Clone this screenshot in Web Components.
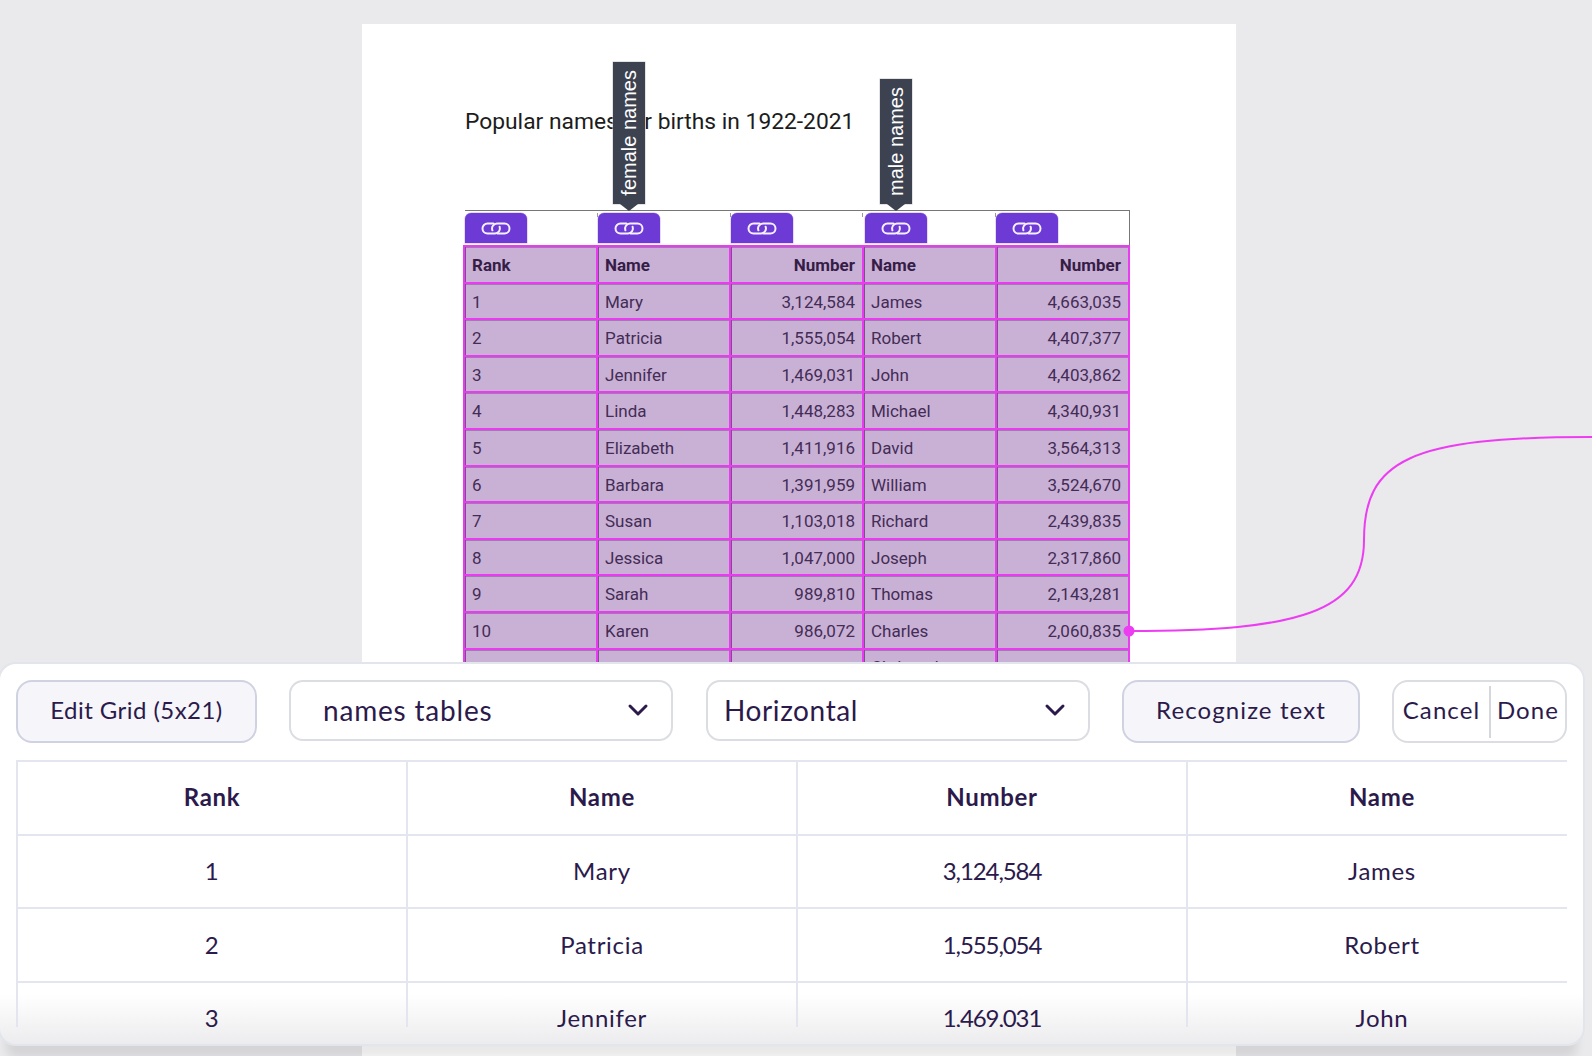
<!DOCTYPE html>
<html>
<head>
<meta charset="utf-8">
<title>Table extraction</title>
<style>
  html, body { margin: 0; height: 100%; }
  body { background: #eaeaed; overflow: hidden; position: relative; height: 1056px; font-family: "Lato", sans-serif; }
</style>
</head>
<body>
<doc-page>
  <span slot="title">Popular names for births in 1922-2021</span>
  <names-table></names-table>
</doc-page>
<link-wire></link-wire>
<grid-panel>
  <ui-button>Edit Grid (5x21)</ui-button>
  <ui-select style="width:384px;margin-left:32px" pad="32" size="28">names tables</ui-select>
  <ui-select style="width:384px;margin-left:33px;letter-spacing:.6px" pad="16" size="28">Horizontal</ui-select>
  <ui-button style="width:238px;margin-left:32px;letter-spacing:1.1px">Recognize text</ui-button>
  <done-group></done-group>
</grid-panel>

<script>
// Datos de la tabla que aparece en el documento
const HEAD = ["Rank", "Name", "Number", "Name", "Number"];
const ROWS = [
  ["1", "Mary", "3,124,584", "James", "4,663,035"],
  ["2", "Patricia", "1,555,054", "Robert", "4,407,377"],
  ["3", "Jennifer", "1,469,031", "John", "4,403,862"],
  ["4", "Linda", "1,448,283", "Michael", "4,340,931"],
  ["5", "Elizabeth", "1,411,916", "David", "3,564,313"],
  ["6", "Barbara", "1,391,959", "William", "3,524,670"],
  ["7", "Susan", "1,103,018", "Richard", "2,439,835"],
  ["8", "Jessica", "1,047,000", "Joseph", "2,317,860"],
  ["9", "Sarah", "989,810", "Thomas", "2,143,281"],
  ["10", "Karen", "986,072", "Charles", "2,060,835"],
  ["", "", "", "Christopher", ""],
];

class DocPage extends HTMLElement {
  constructor() {
    super();
    this.attachShadow({ mode: "open" });
    this.shadowRoot.innerHTML = `
    <style>
      :host { display: block; box-sizing: border-box; width: 874px; height: 1032px; margin: 24px 0 0 362px; padding: 85px 0 0 101px; background: #fff; }
      .title { margin-left: 2px; height: 26px; font: 400 22.8px/26px Roboto, sans-serif; color: #1c1c1c; white-space: nowrap; }
      .body { margin-top: 75px; }
    </style>
    <div class="title"><slot name="title"></slot></div>
    <div class="body"><slot></slot></div>`;
  }
}

class LinkTab extends HTMLElement {
  constructor() {
    super();
    this.attachShadow({ mode: "open" });
    const label = this.getAttribute("label");
    this.shadowRoot.innerHTML = `
    <style>
      :host { display: flex; align-items: center; justify-content: center; position: relative; box-sizing: border-box; width: 62px; height: 30px; background: #6e3ad6; border-radius: 6px 6px 0 0; box-shadow: 0 0 0 .5px #c9b8ef; }
      svg { display: block; }
      .tip { position: absolute; left: 50%; bottom: 39px; transform: translateX(-50%); width: 32px; height: var(--tip-h); background: #3d4250; color: #fff; z-index: 2; display: flex; align-items: center; justify-content: center; box-shadow: 0 0 0 .5px #c7c8cc; }
      .tip span { writing-mode: vertical-rl; transform: rotate(180deg); font: 400 20px/32px "Liberation Sans", sans-serif; white-space: nowrap; }
      .tip::after { content: ""; position: absolute; left: 50%; top: 100%; margin-left: -9px; border: 9px solid transparent; border-bottom: 0; border-top: 7px solid #3d4250; }
    </style>
    <svg width="30" height="13" viewBox="0 0 30 13" fill="none" stroke="#f4f0fd" stroke-width="2" stroke-linecap="round">
      <path d="M12.5 1.5H6.5a5 5 0 0 0 0 10H14a5 5 0 0 0 4.6-6.8"/>
      <path d="M16.5 11.5h7a5 5 0 0 0 0-10H16a5 5 0 0 0-4.6 6.8"/>
    </svg>
    ${label ? `<div class="tip"><span>${label}</span></div>` : ""}`;
  }
}

class NamesTable extends HTMLElement {
  constructor() {
    super();
    this.attachShadow({ mode: "open" });
    const tips = { 1: "female names", 3: "male names" };
    const tabs = HEAD.map((_, i) => `<div class="slot"><link-tab ${tips[i] ? `label="${tips[i]}"` : ""} style="--tip-h:${i === 1 ? 142 : 125}px;${i === 3 ? "margin-left:1.5px" : ""}"></link-tab></div>`).join("");
    const cell = (txt, i, cls) => `<div class="cell ${cls} ${i === 2 || i === 4 ? "num" : ""}">${txt}</div>`;
    const rows = HEAD.map((t, i) => cell(t, i, "th")).join("") +
      ROWS.map(r => r.map((t, i) => cell(t, i, "")).join("")).join("");
    this.shadowRoot.innerHTML = `
    <style>
      :host { display: block; width: 667px; font-family: Roboto, sans-serif; }
      .tabs { display: grid; grid-template-columns: repeat(5, 132.8px); box-sizing: border-box; height: 35px; margin-left: 2px; padding-top: 2px; width: 665px; border-top: 1px solid #777; border-right: 1px solid #777; }
      .slot { box-shadow: -1px 0 0 0 #999; height: 4px; }
      .slot:first-of-type { box-shadow: none; }
      .grid { display: grid; grid-template-columns: repeat(5, 133px); grid-auto-rows: 36.6px; box-sizing: border-box; width: 667px; border-right: 2px solid #e93cf0; }
      .cell { box-sizing: border-box; background: #c9b1d5; border-left: 2px solid #e93cf0; border-top: 2px solid #e93cf0; box-shadow: inset 1px 0 0 #7a4f8c, inset 0 1px 0 #a07ab0; padding: 1px 7px 0 7px; font-size: 17px; line-height: 34px; color: #432c55; white-space: nowrap; overflow: hidden; }
      .cell:nth-last-child(-n+5) { padding-top: 0; }
      .th { font-weight: 700; color: #351d47; }
      .num { text-align: right; }
    </style>
    <div class="tabs">${tabs}</div>
    <div class="grid">${rows}</div>`;
  }
}

class LinkWire extends HTMLElement {
  constructor() {
    super();
    this.attachShadow({ mode: "open" });
    this.shadowRoot.innerHTML = `
    <style>:host { position: absolute; left: 0; top: 0; display: block; width: 1592px; height: 1056px; pointer-events: none; }</style>
    <svg width="1592" height="1056" fill="none">
      <path d="M1129 631C1300 631 1364 612 1364 540C1364 460 1410 437 1592 437" stroke="#ec3df2" stroke-width="2"/>
      <circle cx="1129" cy="631" r="5.5" fill="#ec3df2"/>
    </svg>`;
  }
}

class UiButton extends HTMLElement {
  constructor() {
    super();
    this.attachShadow({ mode: "open" });
    this.shadowRoot.innerHTML = `
    <style>
      :host { display: flex; align-items: center; justify-content: center; box-sizing: border-box; width: 241px; height: 63px; padding-bottom: 4px; background: #f6f6fa; border: 2px solid #cfd2e1; border-radius: 16px; font-size: 24px; letter-spacing: .45px; color: #2b1a4b; white-space: nowrap; }
    </style>
    <slot></slot>`;
  }
}

class UiSelect extends HTMLElement {
  constructor() {
    super();
    this.attachShadow({ mode: "open" });
    const pad = this.getAttribute("pad");
    const size = this.getAttribute("size");
    this.shadowRoot.innerHTML = `
    <style>
      :host { display: flex; align-items: center; justify-content: space-between; box-sizing: border-box; height: 61px; background: #fff; border: 2px solid #dcdde2; border-radius: 14px; padding: 0 22px 2px ${pad}px; font-size: ${size}px; letter-spacing: .8px; color: #2b1a4b; white-space: nowrap; }
      svg { display: block; }
    </style>
    <span><slot></slot></span>
    <svg width="22" height="14" viewBox="0 0 22 14" fill="none" stroke="#2b1a4b" stroke-width="3" stroke-linecap="round" stroke-linejoin="round"><path d="M3 3l8 8 8-8"/></svg>`;
  }
}

class DoneGroup extends HTMLElement {
  constructor() {
    super();
    this.attachShadow({ mode: "open" });
    this.shadowRoot.innerHTML = `
    <style>
      :host { display: flex; align-items: center; box-sizing: border-box; width: 175px; height: 63px; margin-left: 32px; background: #fff; border: 2px solid #dcdde2; border-radius: 16px; font-size: 24px; letter-spacing: 1.1px; color: #2b1a4b; }
      span { flex: 1; text-align: center; padding-bottom: 4px; }
      i { width: 2px; height: 52px; background: #d6d7dc; }
      span:first-of-type { flex: 0 0 95px; }
    </style>
    <span>Cancel</span><i></i><span>Done</span>`;
  }
}

class PreviewTable extends HTMLElement {
  constructor() {
    super();
    this.attachShadow({ mode: "open" });
    const cols = [0, 1, 2, 3];
    const rows = [HEAD, ROWS[0], ROWS[1], ROWS[2]];
    const html = rows.map((r, ri) => cols.map(i => `<div class="c ${ri === 0 ? "h" : ""} ${ri > 0 && i === 2 ? "n" : ""}">${r[i]}</div>`).join("")).join("");
    this.shadowRoot.innerHTML = `
    <style>
      :host { display: block; position: relative; width: 1551px; height: 267px; overflow: hidden; border-top: 2px solid #e3e6ee; box-sizing: border-box; margin-top: 17px; }
      .g { display: grid; grid-template-columns: repeat(4, 390px); grid-auto-rows: 73.7px; }
      .c { box-sizing: border-box; border-left: 2px solid #e3e6ee; border-bottom: 2px solid #e3e6ee; padding-bottom: 2px; display: flex; align-items: center; justify-content: center; font-size: 24px; letter-spacing: .7px; color: #2b1a4b; }
      .h { font-weight: 700; }
      .n { letter-spacing: -1.1px; }
    </style>
    <div class="g">${html}</div>`;
  }
}

class GridPanel extends HTMLElement {
  constructor() {
    super();
    this.attachShadow({ mode: "open" });
    this.shadowRoot.innerHTML = `
    <style>
      :host { position: absolute; left: 0; top: 664px; display: block; box-sizing: border-box; width: 1583px; height: 380px; padding: 16px 0 0 16px; background: linear-gradient(#fff 330px, #ececee 380px); border-radius: 16px; box-shadow: 0 0 0 2px #e2e5eb, 0 20px 10px -6px rgba(0,0,0,.09); }
      .bar { display: flex; align-items: flex-start; }
    </style>
    <div class="bar"><slot></slot></div>
    <preview-table></preview-table>`;
  }
}

// Registro de los componentes
customElements.define("doc-page", DocPage);
customElements.define("link-tab", LinkTab);
customElements.define("names-table", NamesTable);
customElements.define("link-wire", LinkWire);
customElements.define("ui-button", UiButton);
customElements.define("ui-select", UiSelect);
customElements.define("done-group", DoneGroup);
customElements.define("preview-table", PreviewTable);
customElements.define("grid-panel", GridPanel);
</script>
</body>
</html>
